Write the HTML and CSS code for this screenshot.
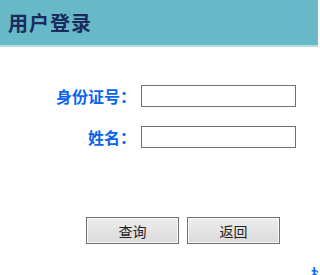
FILE: index.html
```html
<!DOCTYPE html>
<html lang="zh">
<head>
<meta charset="utf-8">
<title>用户登录</title>
<link rel="stylesheet" href="styles.css">
</head>
<body>
<div class="header"><h1 class="title">用户登录</h1></div>
<form class="form">
  <div class="grid">
    <label class="label" for="idno">身份证号：</label>
    <input class="input" id="idno" type="text">
    <label class="label" for="name">姓名：</label>
    <input class="input" id="name" type="text">
  </div>
  <div class="actions">
    <button class="btn" type="button">查询</button>
    <button class="btn" type="button">返回</button>
  </div>
  <div class="more"><a class="link" href="#">找回密码</a></div>
</form>
</body>
</html>
```
FILE: styles.css
```css
html, body {
  margin: 0;
  padding: 0;
  background: #fff;
  overflow: hidden;
  width: 318px;
  height: 275px;
  font-family: "Noto Sans CJK SC", "Noto Sans", sans-serif;
}
.header {
  height: 45px;
  background: #67b9c8;
  border-bottom: 2px solid #b3dfe7;
  display: flex;
  align-items: center;
  padding-left: 8px;
}
.title {
  margin: 0;
  font-size: 20px;
  font-weight: bold;
  color: #1b2c5c;
  letter-spacing: 1px;
  line-height: 1;
}
.form {
  margin: 0;
  padding-top: 38px;
}
.grid {
  display: grid;
  grid-template-columns: 130px 155px;
  column-gap: 11px;
  row-gap: 19px;
  align-items: center;
}
.label {
  text-align: right;
  color: #0a64f0;
  font-weight: bold;
  font-size: 16px;
  line-height: 22px;
  white-space: nowrap;
  margin-right: -6px;
}
.input {
  box-sizing: border-box;
  width: 155px;
  height: 22px;
  margin: 0;
  border: 1px solid #707070;
  padding: 0 3px;
  background: #fff;
  outline: none;
}
.actions {
  display: flex;
  gap: 8px;
  padding-left: 86px;
  margin-top: 69px;
}
.btn {
  box-sizing: border-box;
  width: 93px;
  height: 27px;
  margin: 0;
  border: 1px solid #707070;
  box-shadow: inset 0 0 0 1px #fafafa;
  background: linear-gradient(#eeeeee, #dadada);
  font-family: "Noto Sans CJK SC", sans-serif;
  font-size: 14px;
  color: #222;
  padding: 0;
}
.more {
  padding-left: 311px;
  margin-top: 16px;
  white-space: nowrap;
}
.link {
  color: #0a64f0;
  font-size: 14px;
  font-weight: bold;
  text-decoration: none;
}
```
